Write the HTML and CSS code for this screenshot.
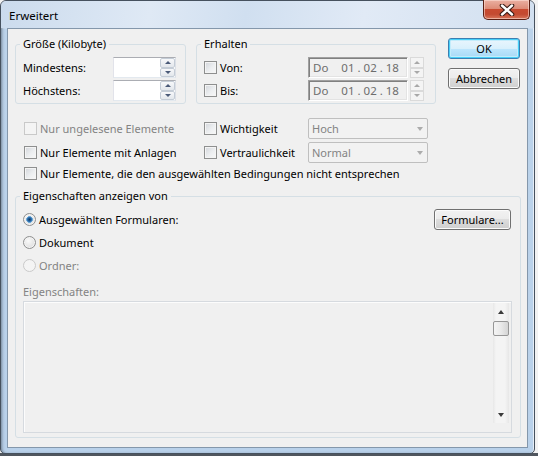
FILE: index.html
```html
<!DOCTYPE html>
<html lang="de">
<head>
<meta charset="utf-8">
<title>Erweitert</title>
<link rel="stylesheet" href="styles.css">
</head>
<body>
<div class="desktop">
  <div class="window">
    <div class="titlebar">
      <span class="title">Erweitert</span>
      <button class="close" type="button" aria-label="Schließen">
        <svg width="16" height="12" viewBox="0 0 16 12"><path d="M3 1.5 L13 10.5 M13 1.5 L3 10.5" stroke="#3a1c16" stroke-width="4.6" stroke-linecap="round"/><path d="M3 1.5 L13 10.5 M13 1.5 L3 10.5" stroke="#ffffff" stroke-width="2.4" stroke-linecap="round"/></svg>
      </button>
    </div>
    <div class="client">
      <div class="top">
        <fieldset class="group g-size">
          <legend>Größe (Kilobyte)</legend>
          <div class="row"><span class="lbl">Mindestens:</span><span class="spinbox"><span class="spin"><span class="sb"><i class="up"></i></span><span class="sb"><i class="down"></i></span></span></span></div>
          <div class="row"><span class="lbl">Höchstens:</span><span class="spinbox"><span class="spin"><span class="sb"><i class="up"></i></span><span class="sb"><i class="down"></i></span></span></span></div>
        </fieldset>
        <fieldset class="group g-keep">
          <legend>Erhalten</legend>
          <div class="row">
            <span class="chk k-date"><span class="box"></span>Von:</span>
            <span class="datefield"><span class="d-day">Do</span><span class="d-date">01 . 02 . 18</span></span>
            <span class="dspin"><span class="dsb"><i class="up"></i></span><span class="dsb"><i class="down"></i></span></span>
          </div>
          <div class="row">
            <span class="chk k-date"><span class="box"></span>Bis:</span>
            <span class="datefield"><span class="d-day">Do</span><span class="d-date">01 . 02 . 18</span></span>
            <span class="dspin"><span class="dsb"><i class="up"></i></span><span class="dsb"><i class="down"></i></span></span>
          </div>
        </fieldset>
        <div class="buttons">
          <button class="btn default" type="button">OK</button>
          <button class="btn" type="button">Abbrechen</button>
        </div>
      </div>

      <div class="filters">
        <span class="chk disabled"><span class="box"></span>Nur ungelesene Elemente</span>
        <span class="chk"><span class="box"></span>Wichtigkeit</span>
        <span class="combo"><span>Hoch</span><i class="arr"></i></span>
        <span class="chk"><span class="box"></span>Nur Elemente mit Anlagen</span>
        <span class="chk"><span class="box"></span>Vertraulichkeit</span>
        <span class="combo"><span>Normal</span><i class="arr"></i></span>
        <span class="chk wide"><span class="box"></span>Nur Elemente, die den ausgewählten Bedingungen nicht entsprechen</span>
      </div>

      <fieldset class="group g-props">
        <legend>Eigenschaften anzeigen von</legend>
        <div class="props-top">
          <div class="radios">
            <span class="radio checked"><span class="dot"></span>Ausgewählten Formularen:</span>
            <span class="radio"><span class="dot"></span>Dokument</span>
            <span class="radio disabled"><span class="dot"></span>Ordner:</span>
          </div>
          <button class="btn forms" type="button">Formulare...</button>
        </div>
        <div class="plabel">Eigenschaften:</div>
        <div class="listbox">
          <div class="vscroll">
            <span class="sarrow"><i class="up"></i></span>
            <span class="thumb"></span>
            <span class="strack"></span>
            <span class="sarrow"><i class="down"></i></span>
          </div>
        </div>
      </fieldset>
    </div>
  </div>
</div>
</body>
</html>
```
FILE: styles.css
```css
* { box-sizing: border-box; }
html, body { margin: 0; padding: 0; }
body {
  width: 538px;
  height: 456px;
  overflow: hidden;
  font-family: "Noto Sans", "Open Sans", sans-serif;
  font-size: 11px;
  color: #000;
  background: #f4f4f4;
}
.desktop {
  width: 538px;
  height: 456px;
  background: linear-gradient(180deg, #f2f2f2 0, #f2f2f2 453px, #50565e 453px);
}
.window {
  width: 535px;
  height: 454px;
  border: 1px solid #46515e;
  border-radius: 6px 6px 5px 5px;
  padding: 0 6px 5px 6px;
  display: flex;
  flex-direction: column;
  background: linear-gradient(180deg, #d6e3f2 0, #d3e1f1 27px, #bcd3ea 28px, #b9d1ea 100%);
  box-shadow: inset 2px 0 3px -1px rgba(55, 65, 78, 0.55), inset -1px 0 0 #e6eef7;
}
.titlebar {
  height: 27px;
  display: flex;
  align-items: flex-start;
  background: linear-gradient(100deg, #cbdbed 0%, #dfe9f5 28%, #d0dff0 46%, #e1eaf6 68%, #d2e0f0 100%);
  margin: 0 -6px;
  padding: 0 4px 0 8px;
  border-radius: 5px 5px 0 0;
}
.title {
  margin-top: 7px;
  line-height: 16px;
  font-size: 11.5px;
  color: #000;
}
.close {
  margin-left: auto;
  margin-top: -1px;
  width: 47px;
  height: 20px;
  padding: 0;
  border: 1px solid #5a1f14;
  border-top: none;
  border-radius: 0 0 5px 5px;
  background: linear-gradient(180deg, #eab0a2 0%, #dd8c78 45%, #c84a30 50%, #c34a31 75%, #d8765c 100%);
  box-shadow: inset 0 0 0 1px rgba(255, 230, 220, 0.55);
  display: flex;
  align-items: center;
  justify-content: center;
}
.client {
  width: 521px;
  height: 420px;
  border: 1px solid #8497ab;
  background: #f0f0f0;
  padding: 7px 0 0 7px;
}
.top {
  display: flex;
  align-items: flex-start;
}
.group {
  margin: 0;
  border: 1px solid #d5dfe5;
  border-radius: 3px;
  padding: 5px 7px 2px 7px;
  min-width: 0;
}
.group legend {
  padding: 0 3px;
  margin-left: -3px;
  line-height: 16px;
  font-size: 11px;
}
.g-size { width: 171px; }
.g-keep { width: 240px; margin-left: 10px; }
.row {
  display: flex;
  align-items: center;
  height: 21px;
}
.row + .row { margin-top: 2px; }
.lbl { width: 90px; }
.spinbox {
  width: 63px;
  height: 21px;
  border: 1px solid;
  border-color: #abadb3 #dbdfe6 #e3e9ef #e2e3ea;
  background: #fff;
  display: flex;
  justify-content: flex-end;
}
.spin {
  width: 15px;
  display: flex;
  flex-direction: column;
}
.sb {
  flex: 1;
  display: flex;
  align-items: center;
  justify-content: center;
  border: 1px solid #c4ccd6;
  border-radius: 2px;
  background: linear-gradient(180deg, #f7f8fa, #e3e7ec);
}
.up, .down {
  display: block;
  width: 0;
  height: 0;
  border-left: 3px solid transparent;
  border-right: 3px solid transparent;
}
.sb .up { border-bottom: 3px solid #4a5a78; }
.sb .down { border-top: 3px solid #4a5a78; }
.chk {
  display: flex;
  align-items: center;
  white-space: nowrap;
  line-height: 15px;
}
.chk .box {
  width: 13px;
  height: 13px;
  flex: none;
  margin-right: 3px;
  border: 1px solid #8e8f8f;
  background: linear-gradient(135deg, #d2d5da 0%, #eceef0 55%, #f8f8f8 100%);
  box-shadow: inset 0 0 0 1px #f4f4f4;
}
.chk.disabled { color: #838383; }
.chk.disabled .box {
  border-color: #c9c9c9;
  background: #f4f4f4;
  box-shadow: none;
}
.k-date { width: 104px; }
.datefield {
  width: 100px;
  height: 21px;
  border: 1px solid;
  border-color: #a0a0a0 #ffffff #ffffff #a0a0a0;
  box-shadow: inset 1px 1px 0 #808080, inset -1px -1px 0 #e3e3e3;
  background: #f0f0f0;
  color: #6d6d6d;
  display: flex;
  align-items: center;
  padding-left: 4px;
  white-space: pre;
  font-size: 11.5px;
}
.d-date { margin-left: 13px; }
.dspin {
  width: 14px;
  height: 21px;
  margin-left: 2px;
  display: flex;
  flex-direction: column;
}
.dsb {
  flex: 1;
  display: flex;
  align-items: center;
  justify-content: center;
  border: 1px solid #dadada;
  background: #f4f4f4;
}
.dsb .up { border-bottom: 3px solid #a8a8a8; }
.dsb .down { border-top: 3px solid #a8a8a8; }
.buttons {
  margin-left: 12px;
  margin-top: 2px;
  display: flex;
  flex-direction: column;
  gap: 9px;
}
.btn {
  width: 72px;
  height: 21px;
  padding: 0;
  font: inherit;
  color: #000;
  border: 1px solid #707070;
  border-radius: 3px;
  background: linear-gradient(180deg, #f2f2f2 0%, #ebebeb 50%, #dddddd 50%, #cfcfcf 100%);
  box-shadow: inset 0 0 0 1px #fbfbfb;
  line-height: 17px;
}
.btn.default {
  border-color: #3c7fb1;
  background: linear-gradient(180deg, #eaf6fd 0%, #d9f0fc 50%, #bee6fd 50%, #a7d9f5 100%);
  box-shadow: inset 0 0 0 1px #48d0f9, inset 0 0 0 2px #c3ecfb;
}
.filters {
  margin-top: 14px;
  padding-left: 9px;
  display: grid;
  grid-template-columns: 180px 104px 120px;
  grid-template-rows: 21px 21px 15px;
  row-gap: 3px;
  align-items: center;
}
.filters .wide { grid-column: 1 / -1; }
.combo {
  height: 21px;
  border: 1px solid #bfbfbf;
  border-radius: 2px;
  background: #f2f2f2;
  color: #838383;
  display: flex;
  align-items: center;
  justify-content: space-between;
  padding: 0 4px 0 3px;
}
.arr {
  display: block;
  width: 0;
  height: 0;
  border-left: 3.5px solid transparent;
  border-right: 3.5px solid transparent;
  border-top: 4px solid #acacac;
}
.g-props {
  width: 506px;
  height: 250px;
  margin-top: 7px;
  padding: 5px 8px 4px 7px;
}
.props-top {
  display: flex;
  justify-content: space-between;
  align-items: flex-start;
}
.radios {
  display: flex;
  flex-direction: column;
  gap: 2px;
}
.radio {
  height: 21px;
  display: flex;
  align-items: center;
  white-space: nowrap;
}
.radio .dot {
  width: 13px;
  height: 13px;
  flex: none;
  margin-right: 3px;
  border-radius: 50%;
  border: 1px solid #8e8f8f;
  background: radial-gradient(circle at 40% 35%, #fafafa 0%, #e6e6e6 55%, #cfd1d4 100%);
  box-shadow: inset 0 0 0 1px #f4f4f4;
}
.radio.checked .dot {
  background:
    radial-gradient(circle at 50% 50%, #0d3a66 0, #2a6aa8 2px, #7ab4e0 3.2px, transparent 3.6px),
    radial-gradient(circle at 40% 35%, #fafafa 0%, #e6e6e6 55%, #cfd1d4 100%);
}
.radio.disabled { color: #838383; }
.radio.disabled .dot {
  border-color: #cacaca;
  background: #f4f4f4;
  box-shadow: none;
}
.btn.forms {
  width: 77px;
  margin-right: 1px;
}
.plabel {
  margin-top: 8px;
  line-height: 16px;
  color: #838383;
}
.listbox {
  margin-top: 1px;
  width: 489px;
  height: 132px;
  border: 1px solid #d6dadf;
  box-shadow: inset 1px 1px 0 #fcfcfc;
  background: #f0f0f0;
  display: flex;
  justify-content: flex-end;
  align-items: flex-start;
  padding: 1px 2px 0 0;
}
.vscroll {
  width: 16px;
  height: 120px;
  display: flex;
  flex-direction: column;
  background: linear-gradient(90deg, #e7e7e7 0, #f4f4f4 3px, #f4f4f4 12px, #e7e7e7 16px);
}
.sarrow {
  height: 17px;
  display: flex;
  align-items: center;
  justify-content: center;
}
.sarrow .up {
  border-left-width: 3.5px;
  border-right-width: 3.5px;
  border-bottom: 4px solid #3a3a3a;
}
.sarrow .down {
  border-left-width: 3.5px;
  border-right-width: 3.5px;
  border-top: 4px solid #3a3a3a;
}
.thumb {
  height: 15px;
  margin-top: 1px;
  border: 1px solid #969696;
  border-radius: 2px;
  background: linear-gradient(90deg, #f4f4f4 0%, #e9e9e9 50%, #d4d4d4 100%);
}
.strack { flex: 1; }
```
